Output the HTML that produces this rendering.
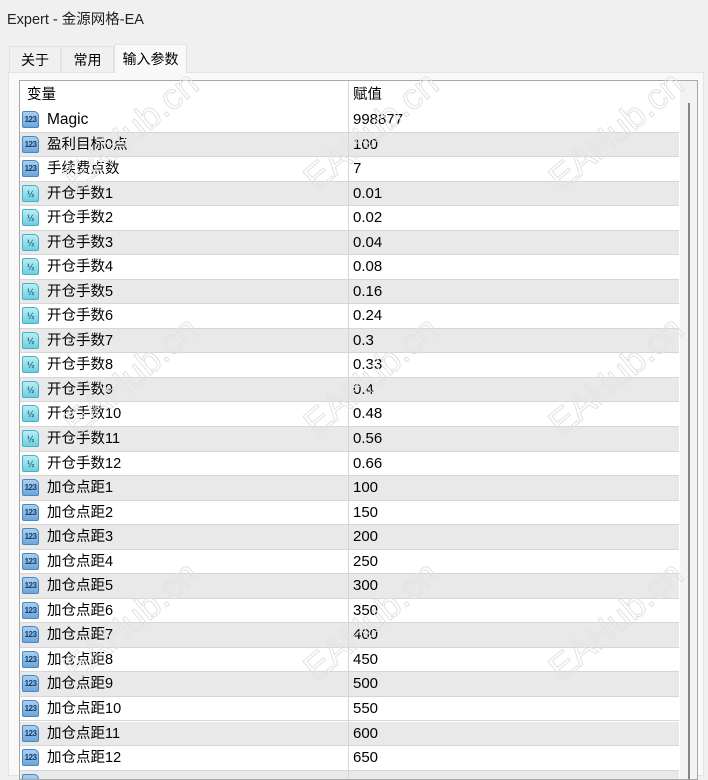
<!DOCTYPE html><html><head><meta charset="utf-8"><style>
body{margin:0;width:708px;height:776px;background:#f0f0f0;font-family:"Liberation Sans","Noto Sans CJK SC",sans-serif;overflow:hidden;position:relative;color:#000}
.title{position:absolute;left:7px;top:8px;font-size:14.5px;color:#222}
.tab{position:absolute;top:46px;height:26px;background:#f0f0f0;border:1px solid #e3e3e3;border-bottom:none;font-size:14px;line-height:26px;text-align:center;box-sizing:border-box}
.panel{position:absolute;left:8px;top:72px;width:696px;height:704px;background:#f9f9f9;border:1px solid #e3e3e3;box-sizing:border-box}
.list{position:absolute;left:19px;top:80px;width:679px;height:700px;background:#fff;border:1px solid #a8a8a8;box-sizing:border-box;overflow:hidden}
.hdr{position:absolute;left:0;top:0;width:660px;height:27px;font-size:14.5px}
.row{position:absolute;left:0;width:659px;height:24.54px;border-bottom:1px solid #d6d6d6;box-sizing:border-box;font-size:14.5px;line-height:24px}
.g{background:#e9e9e9}
.n{position:absolute;left:27px}
.m{font-size:15.5px}
.v{position:absolute;left:333px;font-size:15px}
.div{position:absolute;left:328px;top:0;width:1px;height:700px;background:#d6d6d6}
.ic{position:absolute;left:2px;top:3px;width:17px;height:17px;border-radius:2px 5px 2px 2px;font-size:8px;font-weight:bold;line-height:16px;text-align:center;color:#1a3d6b;letter-spacing:-0.5px}
.a{background:linear-gradient(#a8cff0,#6ea6d8);border:1px solid #4a86c2;box-sizing:border-box}
.b{background:linear-gradient(#b8eef5,#6fcfe0);border:1px solid #45b0c8;box-sizing:border-box;color:#2b6b80;font-size:9px}
.sb{position:absolute;left:660px;top:0;width:17px;height:700px;background:#f3f3f3}
.th{position:absolute;left:668px;top:22px;width:2px;height:680px;background:#858585}
.wm{position:absolute;font-size:36px;color:transparent;-webkit-text-stroke:1px #e2e2e2;transform:rotate(-40deg);white-space:nowrap;font-family:"Liberation Sans",sans-serif}
</style></head><body>
<div class="title">Expert - 金源网格-EA</div>
<div class="panel"></div>
<div class="tab" style="left:9px;width:52px">关于</div>
<div class="tab" style="left:61px;width:53px">常用</div>
<div class="tab" style="left:114px;top:44px;height:29px;width:73px;background:#f9f9f9;line-height:28px">输入参数</div>
<div class="list">
<div class="hdr"><span class="n" style="left:7px;line-height:28px">变量</span><span class="v" style="line-height:28px;font-size:14.5px">赋值</span></div>
<div id="rows"></div>
<div class="div"></div>
<div class="sb"></div><div class="th"></div>
</div>
<div class="wm" style="left:50px;top:110px">EAHub.cn</div>
<div class="wm" style="left:290px;top:110px">EAHub.cn</div>
<div class="wm" style="left:535px;top:110px">EAHub.cn</div>
<div class="wm" style="left:50px;top:355px">EAHub.cn</div>
<div class="wm" style="left:290px;top:355px">EAHub.cn</div>
<div class="wm" style="left:535px;top:355px">EAHub.cn</div>
<div class="wm" style="left:50px;top:600px">EAHub.cn</div>
<div class="wm" style="left:290px;top:600px">EAHub.cn</div>
<div class="wm" style="left:535px;top:600px">EAHub.cn</div>
<script>
var d=[["a","Magic","998877"],["a","盈利目标0点","100"],["a","手续费点数","7"],["b","开仓手数1","0.01"],["b","开仓手数2","0.02"],["b","开仓手数3","0.04"],["b","开仓手数4","0.08"],["b","开仓手数5","0.16"],["b","开仓手数6","0.24"],["b","开仓手数7","0.3"],["b","开仓手数8","0.33"],["b","开仓手数9","0.4"],["b","开仓手数10","0.48"],["b","开仓手数11","0.56"],["b","开仓手数12","0.66"],["a","加仓点距1","100"],["a","加仓点距2","150"],["a","加仓点距3","200"],["a","加仓点距4","250"],["a","加仓点距5","300"],["a","加仓点距6","350"],["a","加仓点距7","400"],["a","加仓点距8","450"],["a","加仓点距9","500"],["a","加仓点距10","550"],["a","加仓点距11","600"],["a","加仓点距12","650"],["a","",""]];
var h="";d.forEach(function(r,i){h+='<div class="row'+(i%2?' g':'')+'" style="top:'+(27+i*24.54)+'px"><div class="ic '+r[0]+'">'+(r[0]=="a"?"123":"½")+'</div><span class="n'+(r[1]=="Magic"?" m":"")+'">'+r[1]+'</span><span class="v">'+r[2]+'</span></div>';});
document.getElementById("rows").innerHTML=h;
</script>
</body></html>
